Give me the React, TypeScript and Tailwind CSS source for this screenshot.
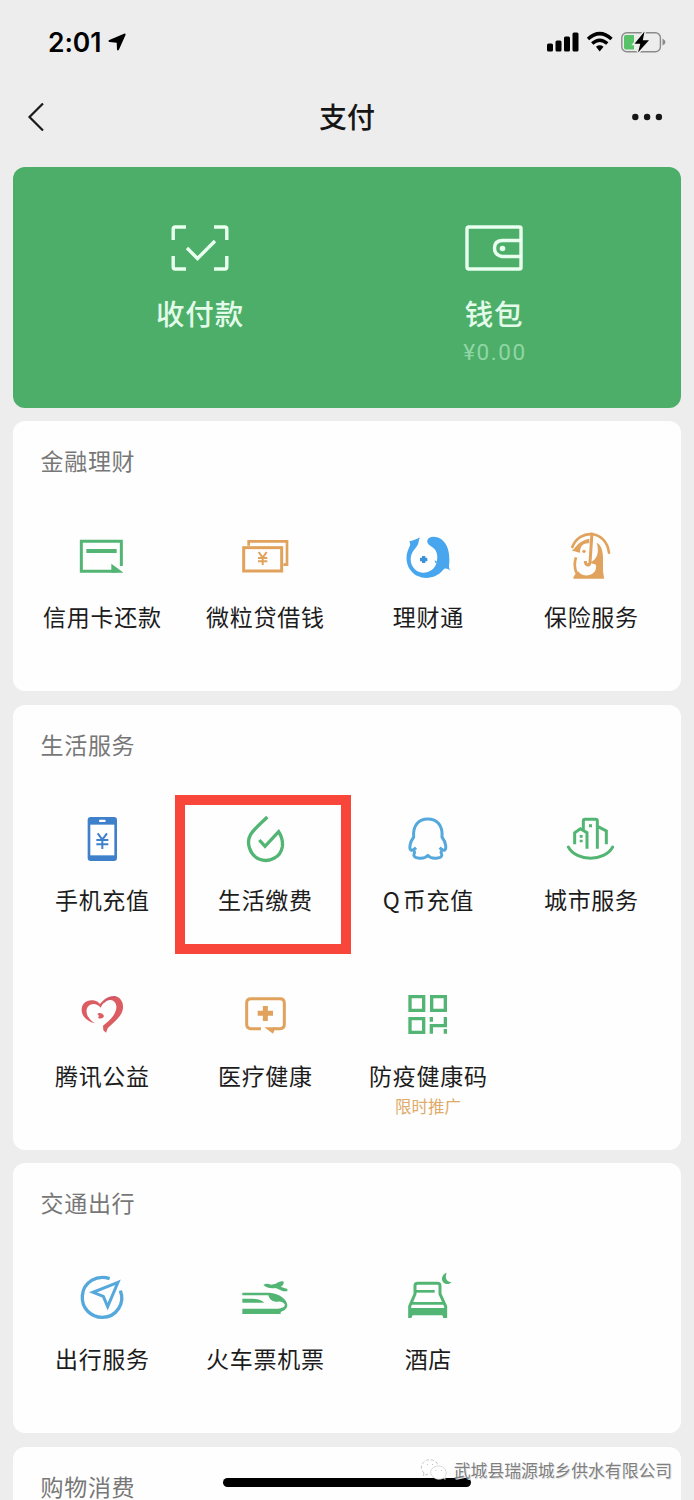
import type { ReactNode } from "react";

const GREEN = "#53b573";
const ORANGE = "#e0a25c";
const BLUE = "#55a8dc";

interface IconProps {
  viewBox: string;
  children: ReactNode;
}

function Icon({ viewBox, children }: IconProps) {
  return (
    <svg viewBox={viewBox} className="w-12 h-12 overflow-visible" fill="none">
      {children}
    </svg>
  );
}

function CreditCardIcon() {
  return (
    <Icon viewBox="174 306 144 144">
      <path d="M304 408V334H184V424H290" stroke={GREEN} strokeWidth="9" />
      <path d="M199 363H290" stroke={GREEN} strokeWidth="12" />
      <path d="M274 401L309 427V428H274Z" fill={GREEN} />
    </Icon>
  );
}

function BanknotesIcon() {
  return (
    <Icon viewBox="664 306 144 144">
      <path d="M687 347V334H802V404H791" stroke={ORANGE} strokeWidth="8" />
      <rect x="672" y="353" width="114" height="70" stroke={ORANGE} strokeWidth="9" />
      <path d="M717 366L729 383L741 366M729 383V405M715 384H743M715 394H743" stroke={ORANGE} strokeWidth="6" />
    </Icon>
  );
}

function WealthIcon() {
  return (
    <Icon viewBox="104 66 144 144">
      <path
        d="M152 82C140 89 130 92 120 94C124 102 123 106 119 113C102 148 116 184 145 198C171 210 203 203 224 177C230 174 236 177 243 182C237 174 239 166 240 157C241 126 235 101 215 87C199 77 177 78 174 91C172 103 183 107 192 114C204 124 206 139 202 157C197 178 179 189 160 188C140 187 124 170 124 148C124 127 139 115 145 105C149 98 148 89 152 82Z"
        fill="#47a6ee"
      />
      <path d="M204 155L196 151L198 160Z" fill="#47a6ee" />
      <path d="M158 138H168V143H174V154H168V159H158V154H152V143H158Z" fill="#3d92d6" />
    </Icon>
  );
}

function InsuranceIcon() {
  return (
    <Icon viewBox="595 66 144 144">
      <path d="M684 98C698 104 703 124 703 145V180C703 191 706 197 706 206H614C614 198 619 194 623 188L676 150C686 140 692 124 684 98Z" fill={ORANGE} />
      <path d="M624 146C620 164 624 180 634 190C652 204 682 194 682 172V164L664 158L650 150H632Z" fill="#fefefe" />
      <path d="M622 142C617 156 617 174 624 190" stroke={ORANGE} strokeWidth="8" />
      <path d="M608 122C620 118 624 94 662 86V100C642 98 634 110 634 128C625 126 616 122 608 122Z" fill={ORANGE} />
      <circle cx="646" cy="124" r="5" fill={ORANGE} />
      <path d="M611 111C632 56 712 58 721 128" stroke={ORANGE} strokeWidth="8" strokeLinecap="round" />
      <path d="M670 68L664 158C662 168 650 168 650 153" stroke={ORANGE} strokeWidth="9" />
    </Icon>
  );
}

function PhoneIcon() {
  return (
    <Icon viewBox="174 108 144 144">
      <rect x="203" y="111" width="88" height="132" rx="9" fill="#3f80cb" />
      <rect x="211" y="134" width="72" height="92" fill="#fff" />
      <rect x="237" y="119" width="20" height="7" rx="3" fill="#fff" />
      <path d="M233 160L247 179L261 160M247 179V207M229 180H265M229 193H265" stroke="#3f80cb" strokeWidth="6" />
    </Icon>
  );
}

function BillIcon() {
  return (
    <Icon viewBox="664 108 144 144">
      <path
        d="M743 111C723 131 705 145 693 163C679 187 689 224 718 237C750 250 783 231 788 200C790 183 786 169 777 155L736 199L719 180"
        stroke={GREEN}
        strokeWidth="10"
      />
    </Icon>
  );
}

function PenguinIcon() {
  return (
    <Icon viewBox="134 78 144 144">
      <path
        d="M170 173C166 177 162 182 156 181C149 178 150 159 163 141C160 105 179 87 205.5 87C232 87 251 105 248 141C261 159 262 178 255 181C249 182 245 177 241 173"
        stroke={BLUE}
        strokeWidth="9"
        strokeLinejoin="round"
      />
      <path
        d="M163 182C166 185 167 186 165 190C161 197 165 203 176 204C190 206 200 203 205.5 196C211 203 221 206 235 204C246 203 250 197 246 190C244 186 245 185 248 182"
        stroke={BLUE}
        strokeWidth="9"
        strokeLinejoin="round"
      />
    </Icon>
  );
}

function CityIcon() {
  return (
    <Icon viewBox="625 78 144 144">
      <path d="M648 163V128L665 116L685 128V176M674 119V93Q674 88 679 88H711Q716 88 716 93V176M718 110L743 123V163" stroke={GREEN} strokeWidth="9" />
      <path d="M629 171C654 216 737 216 762 171" stroke={GREEN} strokeWidth="9" strokeLinecap="round" />
      <path d="M691 103H700V112H691ZM663 135H672V143H663ZM663 149H672V157H663Z" fill={GREEN} />
    </Icon>
  );
}

function CharityIcon() {
  return (
    <Icon viewBox="144 66 144 144">
      <path d="M195 160C170 154 153 137 155 116C157 97 174 89 189 91C199 92 206 97 210 102C222 86 238 77 254 78C271 81 281 96 279 115C276 139 254 154 233 175L228 188L220 181L219 167C240 151 256 135 259 115C261 99 250 88 239 90C227 92 217 100 212 113C202 101 186 98 175 109C162 124 174 148 195 160Z" fill="#dc5d61" />
      <path d="M202 131C209 127 219 130 222 138C220 145 213 148 204 143L207 138Z" fill="#dc5d61" />
      <path d="M222 97C231 88 243 82 256 81" stroke="#bd5478" strokeWidth="3" />
    </Icon>
  );
}

function MedicalIcon() {
  return (
    <Icon viewBox="634 66 144 144">
      <path d="M694 176H664Q651 176 651 163V99Q651 86 664 86H751Q764 86 764 99V163Q764 176 751 176H731" stroke={ORANGE} strokeWidth="9" />
      <path d="M704 172H738L730 191Z" fill={ORANGE} />
      <path d="M707 108V153M684 130H730" stroke={ORANGE} strokeWidth="15" />
    </Icon>
  );
}

function HealthCodeIcon() {
  return (
    <Icon viewBox="164 66 144 144">
      <path d="M182 80H223V121H182ZM247 80H288V121H247ZM182 146H223V187H182Z" stroke={GREEN} strokeWidth="10" />
      <path d="M246 141V155M246 191V167H288V141M288 177V191" stroke={GREEN} strokeWidth="10" />
    </Icon>
  );
}

function CompassIcon() {
  return (
    <Icon viewBox="174 72 144 144">
      <path d="M269 86C231 73 190 96 187 137C184 175 213 202 247 202C289 202 316 160 301 122" stroke={BLUE} strokeWidth="10" />
      <path d="M294 97L219 127L250 139L263 170Z" stroke={BLUE} strokeWidth="9" />
    </Icon>
  );
}

function TrainIcon() {
  return (
    <Icon viewBox="664 72 144 144">
      <path d="M668 128H748C781 131 802 148 803 165C803 177 791 183 783 186V192H668V176H775C787 174 797 171 795 163C792 158 784 154 775 155C761 157 750 151 746 136H668Z" fill={GREEN} />
      <path d="M668 146H700C716 147 727 151 734 158H668Z" fill={GREEN} />
      <path d="M731 105C738 100 746 101 754 104L768 101C776 96 786 92 792 95C793 102 789 107 783 110L803 117V124H790L768 114C755 116 742 115 731 105Z" fill={GREEN} />
    </Icon>
  );
}

function HotelIcon() {
  return (
    <Icon viewBox="104 72 144 144">
      <path d="M121 204V169L137 132V107Q137 100 145 100H204Q212 100 212 107V132L229 169V204" stroke={GREEN} strokeWidth="9" />
      <path d="M137 124H196" stroke={GREEN} strokeWidth="8" />
      <path d="M126 160H223" stroke={GREEN} strokeWidth="8" />
      <path d="M119 174H230V204H222L219 196H130L126 204H119Z" fill={GREEN} />
      <path d="M232 68C215 73 213 95 228 101C235 104 243 101 247 96C231 96 226 83 232 68Z" fill={GREEN} />
    </Icon>
  );
}

interface Service {
  label: string;
  icon: ReactNode;
  note?: string;
  highlighted?: boolean;
}

interface SectionProps {
  title: string;
  services: Service[];
  className: string;
}

const finance: Service[] = [
  { label: "信用卡还款", icon: <CreditCardIcon /> },
  { label: "微粒贷借钱", icon: <BanknotesIcon /> },
  { label: "理财通", icon: <WealthIcon /> },
  { label: "保险服务", icon: <InsuranceIcon /> },
];

const life: Service[] = [
  { label: "手机充值", icon: <PhoneIcon /> },
  { label: "生活缴费", icon: <BillIcon />, highlighted: true },
  { label: "Q\u200a币充值", icon: <PenguinIcon /> },
  { label: "城市服务", icon: <CityIcon /> },
  { label: "腾讯公益", icon: <CharityIcon /> },
  { label: "医疗健康", icon: <MedicalIcon /> },
  { label: "防疫健康码", icon: <HealthCodeIcon />, note: "限时推广" },
];

const travel: Service[] = [
  { label: "出行服务", icon: <CompassIcon /> },
  { label: "火车票机票", icon: <TrainIcon /> },
  { label: "酒店", icon: <HotelIcon /> },
];

function ServiceItem({ label, icon, note, highlighted }: Service) {
  return (
    <div className="relative flex flex-col items-center h-44 pt-[17px]">
      {icon}
      <span className="mt-[19.5px] pl-[0.7px] text-[23px] leading-8 tracking-[0.7px] text-[#1c1c1c] whitespace-nowrap">{label}</span>
      {note && <span className="mt-[3px] text-[16.5px] leading-6 text-[#dfab68]">{note}</span>}
      {highlighted && (
        <div className="absolute -top-[3.5px] -left-[9px] w-[176px] h-[159px] border-[10px] border-[#f9463a]" />
      )}
    </div>
  );
}

function Section({ title, services, className }: SectionProps) {
  return (
    <section className={`bg-[#fefefe] rounded-xl shrink-0 ${className}`}>
      <h2 className="h-[94px] pt-[23px] pl-[27.5px] text-[23px] leading-[33px] tracking-[0.7px] text-[#777]">{title}</h2>
      <div className="grid grid-cols-4 pl-[7.5px] pr-[8.5px]">
        {services.map((service) => (
          <ServiceItem key={service.label} {...service} />
        ))}
      </div>
    </section>
  );
}

function StatusBar() {
  return (
    <div className="flex items-center justify-between h-[84px] pl-12 pr-[27px]">
      <div className="flex items-center gap-[7px]">
        <span className="font-['Inter'] text-[26.5px] leading-8 font-semibold tracking-[-0.1px] text-black">2:01</span>
        <svg className="w-[19px] h-[19px]" viewBox="0 0 19 19">
          <path d="M16 0.7Q18 0 17.500 2L11 16.500Q9.700 18.500 9 16.500L8.700 9.700L1.500 9Q-0.600 8 1.300 7Z" fill="#000" />
        </svg>
      </div>
      <svg className="w-[120px] h-[22px]" viewBox="0 0 120 22">
        <rect x="0" y="12.5" width="6" height="8" rx="1.5" />
        <rect x="8.5" y="9.5" width="6" height="11" rx="1.5" />
        <rect x="17" y="5.5" width="6" height="15" rx="1.5" />
        <rect x="25.5" y="1.5" width="6" height="19" rx="1.5" />
        <g fill="none" stroke="#000" strokeWidth="3.4">
          <path d="M41 8Q52.7 -2.8 64.5 8" />
          <path d="M45.2 12.5Q52.7 5.8 60.3 12.5" />
        </g>
        <path d="M49 15.7Q52.7 12.8 56.5 15.7L52.7 20.4Z" />
        <rect x="74.8" y="1.7" width="38.6" height="19" rx="5" fill="none" stroke="#8b8b8b" strokeWidth="1.4" />
        <path d="M79 4H87V18.5H79Q77 18.5 77 16.5V6Q77 4 79 4Z" fill="#57c268" />
        <path d="M115.5 7.5Q118.5 9 118.5 11T115.5 14.5Z" fill="#8b8b8b" />
        <path d="M97.5 0.5L87.5 12.7H93.3L91 21.5L102 9.2H95.8Z" stroke="#ededed" strokeWidth="3" />
        <path d="M97.5 0.5L87.5 12.7H93.3L91 21.5L102 9.2H95.8Z" />
      </svg>
    </div>
  );
}

function NavBar() {
  return (
    <header className="flex items-center justify-between h-[66px] px-[27px]">
      <svg className="w-[38px] h-7" viewBox="0 0 38 28" fill="none">
        <path d="M16 0.5L2.5 14L16 27.5" stroke="#1a1a1a" strokeWidth="2.2" />
      </svg>
      <h1 className="pb-0.5 text-[28px] leading-9 font-medium text-[#161616]">支付</h1>
      <svg className="w-[38px] h-2" viewBox="0 0 38 8" fill="#161616">
        <circle cx="6.3" cy="4" r="3.2" />
        <circle cx="18.1" cy="4" r="3.2" />
        <circle cx="29.9" cy="4" r="3.2" />
      </svg>
    </header>
  );
}

function WalletPanel() {
  return (
    <section className="grid grid-cols-2 h-[240.5px] shrink-0 px-10 pt-[57.5px] bg-[#4dae69] rounded-xl">
      <div className="flex flex-col items-center">
        <svg className="w-[58px] h-[46px]" viewBox="0 0 58 46" fill="none" stroke="#e9ffef" strokeWidth="3.4">
          <path d="M2.2 15V4Q2.2 2 4.2 2H15M43 2H53.8Q55.8 2 55.8 4V15M2.2 31V42Q2.2 44 4.2 44H15M43 44H53.8Q55.8 44 55.8 42V31" />
          <path d="M16 23L26.5 33.5L44 16" />
        </svg>
        <span className="mt-[22px] text-[28.5px] leading-10 font-medium tracking-[0.8px] text-[#e3fbe9]">收付款</span>
      </div>
      <div className="flex flex-col items-center">
        <svg className="w-[58px] h-[46px]" viewBox="0 0 58 46" fill="none" stroke="#e9ffef" strokeWidth="3.4">
          <rect x="2" y="2" width="54" height="42" rx="1.5" />
          <path d="M56 15.5H37Q29.5 16 29.5 23T37 31.5H56" />
          <circle cx="37.5" cy="23.5" r="2.8" fill="#e9ffef" stroke="none" />
        </svg>
        <span className="mt-[22px] text-[28.5px] leading-10 font-medium tracking-[0.8px] text-[#e3fbe9]">钱包</span>
        <span className="mt-px pl-0.5 font-['Roboto'] text-[22.5px] leading-9 tracking-[1.6px] text-[#8fd6a4]">¥0.00</span>
      </div>
    </section>
  );
}

function Watermark() {
  return (
    <div className="absolute right-[22px] bottom-[18px] flex items-center gap-1.5">
      <svg className="w-7 h-6" viewBox="0 0 28 24" fill="#fff" stroke="#b5b5b5" strokeWidth="0.8">
        <path d="M4 15Q-1 9 3.5 4.5Q9-1 16 4Q18 6 18 8" strokeDasharray="3 2" />
        <path d="M4 15L3.5 18L8 16" strokeDasharray="3 2" />
        <path d="M24 20Q17 23 12.5 18.5Q8 13 14 9Q20 6 25 11Q28 15 25 18.5V21.5Z" stroke="#d0d0d0" />
        <path d="M7 6.5H8M12 6.5H13M15.5 12.5H16.5M21 12.5H22" />
      </svg>
      <span className="text-[16.8px] leading-6 text-[#808080] [text-shadow:-1px_-1px_0_#fff,1px_1px_0_#ddd] whitespace-nowrap">
        武城县瑞源城乡供水有限公司
      </span>
    </div>
  );
}

export default function App() {
  return (
    <div className="relative w-[694px] h-[1500px] overflow-hidden bg-[#ededed] font-['Noto_Sans_CJK_SC',sans-serif]">
      <StatusBar />
      <NavBar />
      <main className="flex flex-col gap-[13.5px] px-[13px] pt-[17px]">
        <WalletPanel />
        <Section title="金融理财" services={finance} className="h-[270px]" />
        <Section title="生活服务" services={life} className="h-[445px]" />
        <Section title="交通出行" services={travel} className="h-[270px]" />
        <Section title="购物消费" services={[]} className="h-[94px]" />
      </main>
      <div className="absolute left-[223px] bottom-[13px] w-[248px] h-[9px] rounded-full bg-black" />
      <Watermark />
    </div>
  );
}
